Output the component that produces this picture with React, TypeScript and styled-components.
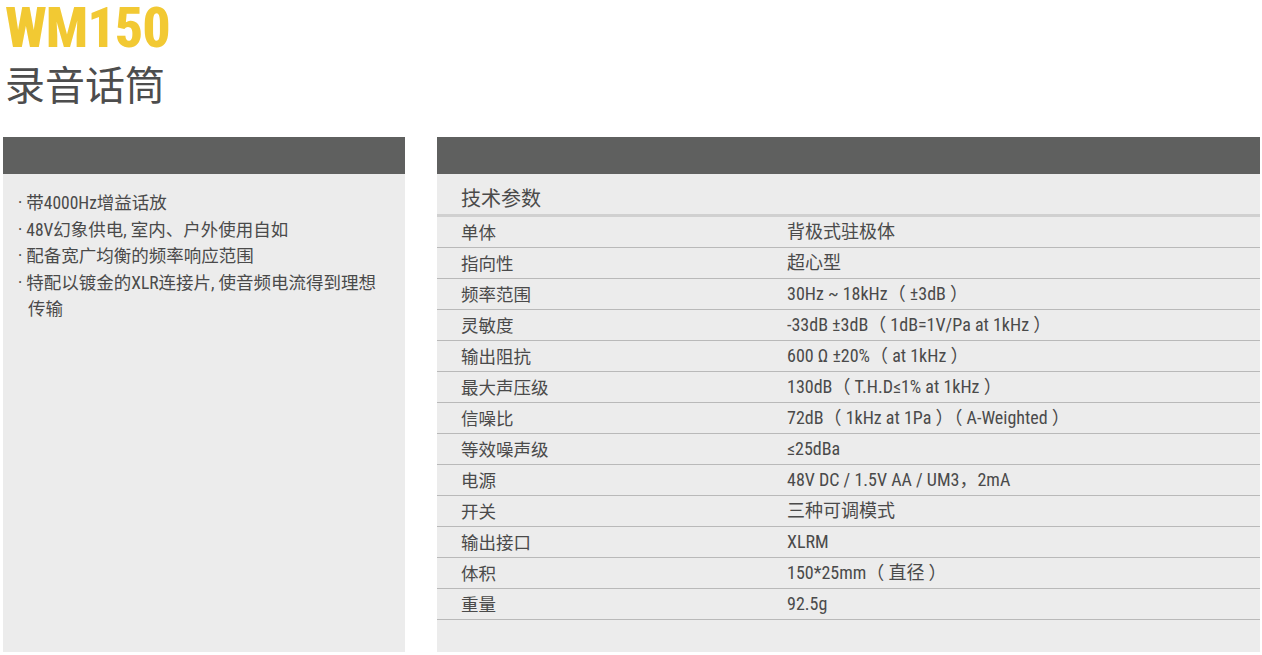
import React from "react";
import styled, { createGlobalStyle } from "styled-components";

const Global = createGlobalStyle`
  html, body { margin: 0; padding: 0; background: #ffffff; }
  body {
    font-family: "Roboto", "Noto Sans CJK SC", sans-serif;
    font-stretch: 75%;
    color: #4a4a4a;
  }
`;

const Page = styled.div`
  width: 1262px;
  height: 655px;
  overflow: hidden;
  display: flex;
  flex-direction: column;
`;

const Heading = styled.header`
  padding: 0 0 0 5px;
  height: 137px;
  display: flex;
  flex-direction: column;
`;

const Model = styled.h1`
  margin: 0;
  font-family: "Roboto", sans-serif;
  font-stretch: 75%;
  font-weight: 800;
  font-size: 56px;
  line-height: 56px;
  letter-spacing: -1px;
  color: #f2c933;
`;

const Subtitle = styled.h2`
  margin: 0;
  font-family: "Noto Sans CJK SC", sans-serif;
  font-weight: 400;
  font-size: 40px;
  line-height: 54px;
  color: #4d4d4d;
`;

const Columns = styled.main`
  display: grid;
  grid-template-columns: 402px 823px;
  column-gap: 32px;
  padding-left: 3px;
  height: 515px;
`;

const Panel = styled.section`
  background: #ececec;
  display: flex;
  flex-direction: column;
`;

const PanelHead = styled.div`
  height: 37px;
  background: #5f605f;
  flex: none;
`;

const Features = styled.ul`
  list-style: none;
  margin: 0;
  padding: 16px 20px 0 15px;
`;

const Feature = styled.li`
  font-family: "Roboto", "Noto Sans CJK SC", sans-serif;
  font-stretch: 75%;
  font-size: 17.5px;
  line-height: 26.5px;
  padding-left: 10px;
  text-indent: -10px;
  color: #4a4a4a;
`;

const SpecTitle = styled.div`
  font-family: "Noto Sans CJK SC", sans-serif;
  font-size: 20px;
  line-height: 31px;
  padding: 8px 0 0 24px;
  height: 32px;
  color: #4a4a4a;
  border-bottom: 3px solid #d0d0d0;
`;

const SpecRow = styled.div`
  display: grid;
  grid-template-columns: 326px 1fr;
  height: 30px;
  border-bottom: 1px solid #b9b9b9;
  align-items: center;
  padding-left: 24px;
  line-height: 30px;
`;

const Label = styled.span`
  font-family: "Noto Sans CJK SC", sans-serif;
  font-size: 17.5px;
  color: #4a4a4a;
`;

const Value = styled.span`
  font-family: "Roboto", "Noto Sans CJK SC", sans-serif;
  font-stretch: 75%;
  font-size: 18px;
  color: #4a4a4a;
`;

const features = [
  "· 带4000Hz增益话放",
  "· 48V幻象供电, 室内、户外使用自如",
  "· 配备宽广均衡的频率响应范围",
  "· 特配以镀金的XLR连接片, 使音频电流得到理想传输",
];

const specs: [string, string][] = [
  ["单体", "背极式驻极体"],
  ["指向性", "超心型"],
  ["频率范围", "30Hz ~ 18kHz（ ±3dB ）"],
  ["灵敏度", "-33dB ±3dB（ 1dB=1V/Pa at 1kHz ）"],
  ["输出阻抗", "600 Ω  ±20%（ at 1kHz ）"],
  ["最大声压级", "130dB（ T.H.D≤1% at 1kHz ）"],
  ["信噪比", "72dB（ 1kHz at 1Pa ）（ A-Weighted ）"],
  ["等效噪声级", "≤25dBa"],
  ["电源", "48V DC / 1.5V AA / UM3，2mA"],
  ["开关", "三种可调模式"],
  ["输出接口", "XLRM"],
  ["体积", "150*25mm（ 直径 ）"],
  ["重量", "92.5g"],
];

export default function App() {
  return (
    <>
      <Global />
      <Page>
        <Heading>
          <Model>WM150</Model>
          <Subtitle>录音话筒</Subtitle>
        </Heading>
        <Columns>
          <Panel>
            <PanelHead />
            <Features>
              {features.map((f) => (
                <Feature key={f}>{f}</Feature>
              ))}
            </Features>
          </Panel>
          <Panel>
            <PanelHead />
            <SpecTitle>技术参数</SpecTitle>
            {specs.map(([k, v]) => (
              <SpecRow key={k}>
                <Label>{k}</Label>
                <Value>{v}</Value>
              </SpecRow>
            ))}
          </Panel>
        </Columns>
      </Page>
    </>
  );
}
